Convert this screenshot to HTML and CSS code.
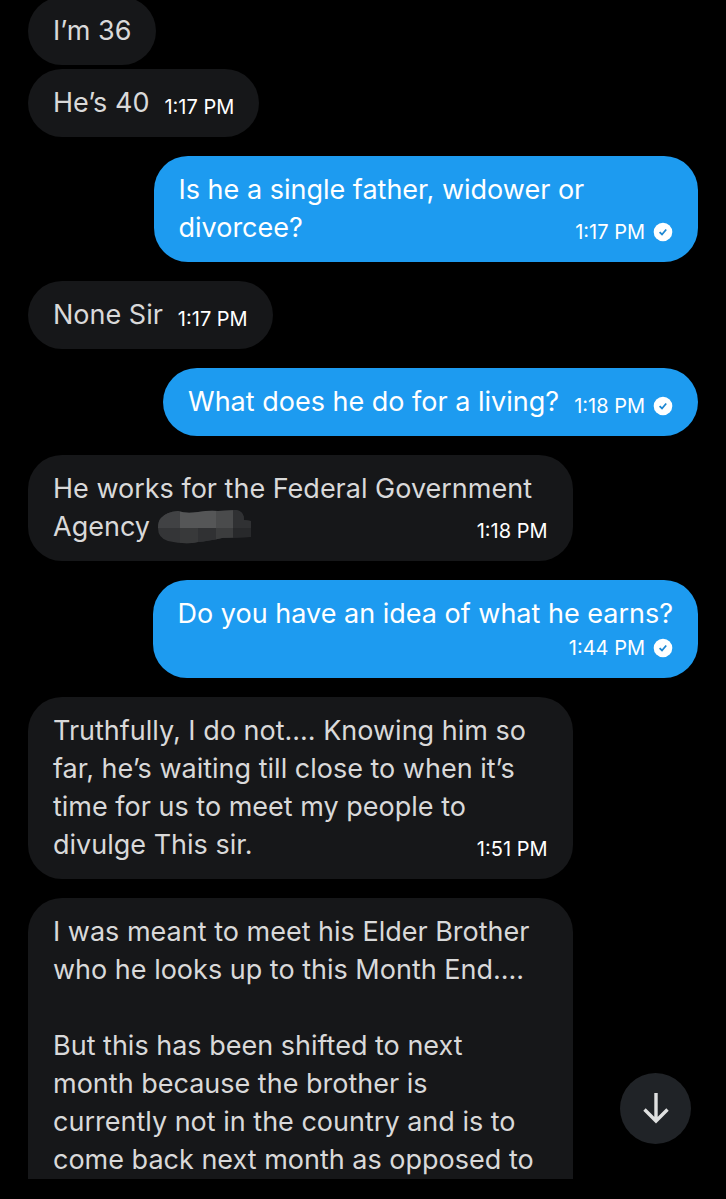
FILE: index.html
```html
<!DOCTYPE html>
<html lang="en">
<head>
    <meta charset="UTF-8">
    <title>Messages</title>
    <link rel="stylesheet" href="styles.css">
</head>
<body>
<svg width="0" height="0" class="sprite" aria-hidden="true">
    <symbol id="sent" viewBox="0 0 20 20">
        <circle cx="10" cy="10" r="9.3" fill="#fff"/>
        <path d="M6.6 10.2l2.4 2.3 4.2-5" fill="none" stroke="#1d87d2" stroke-width="1.8"/>
    </symbol>
</svg>
<main class="chat">
    <div class="message received grouped">
        <p class="text">I’m 36</p>
    </div>
    <div class="message received">
        <p class="text">He’s 40</p>
        <span class="meta">1:17 PM</span>
    </div>
    <div class="message sent wide">
        <p class="text">Is he a single father, widower or<br>divorcee?</p>
        <span class="meta over">1:17 PM <svg class="check"><use href="#sent"/></svg></span>
    </div>
    <div class="message received">
        <p class="text">None Sir</p>
        <span class="meta">1:17 PM</span>
    </div>
    <div class="message sent">
        <p class="text">What does he do for a living?</p>
        <span class="meta">1:18 PM <svg class="check"><use href="#sent"/></svg></span>
    </div>
    <div class="message received wide">
        <p class="text">He works for the Federal Government<br>Agency
            <svg class="redacted" viewBox="0 0 93 34" aria-hidden="true">
                <clipPath id="smudge">
                    <path d="M3 8Q8 2 20 1Q28 4 40 2Q52 0 60 1L78 0Q86 1 86 10L93 11V27L64 28Q50 31 40 32Q28 35 10 31Q0 28 0 18Q0 11 3 8z"/>
                </clipPath>
                <g clip-path="url(#smudge)" shape-rendering="crispEdges">
                    <rect width="93" height="34" fill="#343537"/>
                    <path d="M0 0h22v18H0z" fill="#414244"/>
                    <path d="M22 0h36v18H22z" fill="#555657"/>
                    <path d="M58 0h17v18H58z" fill="#4a4b4c"/>
                    <path d="M75 0h18v18H75z" fill="#303133"/>
                    <path d="M22 18h18v16H22z" fill="#38393a"/>
                    <path d="M40 18h18v16H40z" fill="#303133"/>
                    <path d="M58 18h17v16H58z" fill="#3c3d3e"/>
                    <path d="M75 18h18v16H75z" fill="#28292b"/>
                </g>
            </svg>
        </p>
        <span class="meta over">1:18 PM</span>
    </div>
    <div class="message sent below">
        <p class="text">Do you have an idea of what he earns?</p>
        <span class="meta">1:44 PM <svg class="check"><use href="#sent"/></svg></span>
    </div>
    <div class="message received wide">
        <p class="text">Truthfully, I do not.... Knowing him so<br>far, he’s waiting till close to when it’s<br>time for us to meet my people to<br>divulge This sir.</p>
        <span class="meta over">1:51 PM</span>
    </div>
    <div class="message received wide last">
        <p class="text">I was meant to meet his Elder Brother<br>who he looks up to this Month End....<br><br>But this has been shifted to next<br>month because the brother is<br>currently not in the country and is to<br>come back next month as opposed to</p>
    </div>
</main>
<button class="scroll-down" aria-label="Scroll to latest">
    <svg width="36" height="36" viewBox="0 0 36 36"><path d="M18 2v28.5M6.5 18.5L18 30l11.5-11.5" fill="none" stroke="#dfe0e0" stroke-width="3.4"/></svg>
</button>
</body>
</html>
```
FILE: styles.css
```css
body {
    margin: 0;
    background: #000;
    color: #d9d9d9;
    font-family: Inter, "Noto Sans", sans-serif;
}

.sprite {
    position: absolute;
}

.chat {
    display: flex;
    flex-direction: column;
    align-items: flex-start;
    gap: 19px;
    padding: 0 28px 20px;
}

.message {
    display: flex;
    align-items: flex-end;
    gap: 15px;
    position: relative;
    box-sizing: border-box;
    padding: 15px 25px;
    border-radius: 34px;
    background: #161719;
}

.grouped {
    margin: -3px 0 -15px;
}

.sent {
    align-self: flex-end;
    background: #1d9bf0;
    color: #fff;
}

.wide {
    width: 75vw;
}

.text {
    margin: 0;
    font-size: 27px;
    line-height: 38px;
}

.meta {
    display: flex;
    align-items: center;
    gap: 8px;
    font-size: 20px;
    line-height: 30px;
    white-space: nowrap;
    color: #fff;
}

.over {
    position: absolute;
    right: 25px;
    bottom: 15px;
}

.below {
    flex-direction: column;
    gap: 0;
}

.check {
    width: 20px;
    height: 20px;
}

.redacted {
    width: 93px;
    height: 34px;
    margin-top: 2px;
    vertical-align: top;
}

.last {
    border-radius: 34px 34px 0 0;
    padding-bottom: 0;
}

.scroll-down {
    position: fixed;
    right: 35px;
    bottom: 55px;
    display: flex;
    align-items: center;
    justify-content: center;
    width: 71px;
    height: 71px;
    padding: 0;
    border: 0;
    border-radius: 50%;
    background: #202327;
}
```
